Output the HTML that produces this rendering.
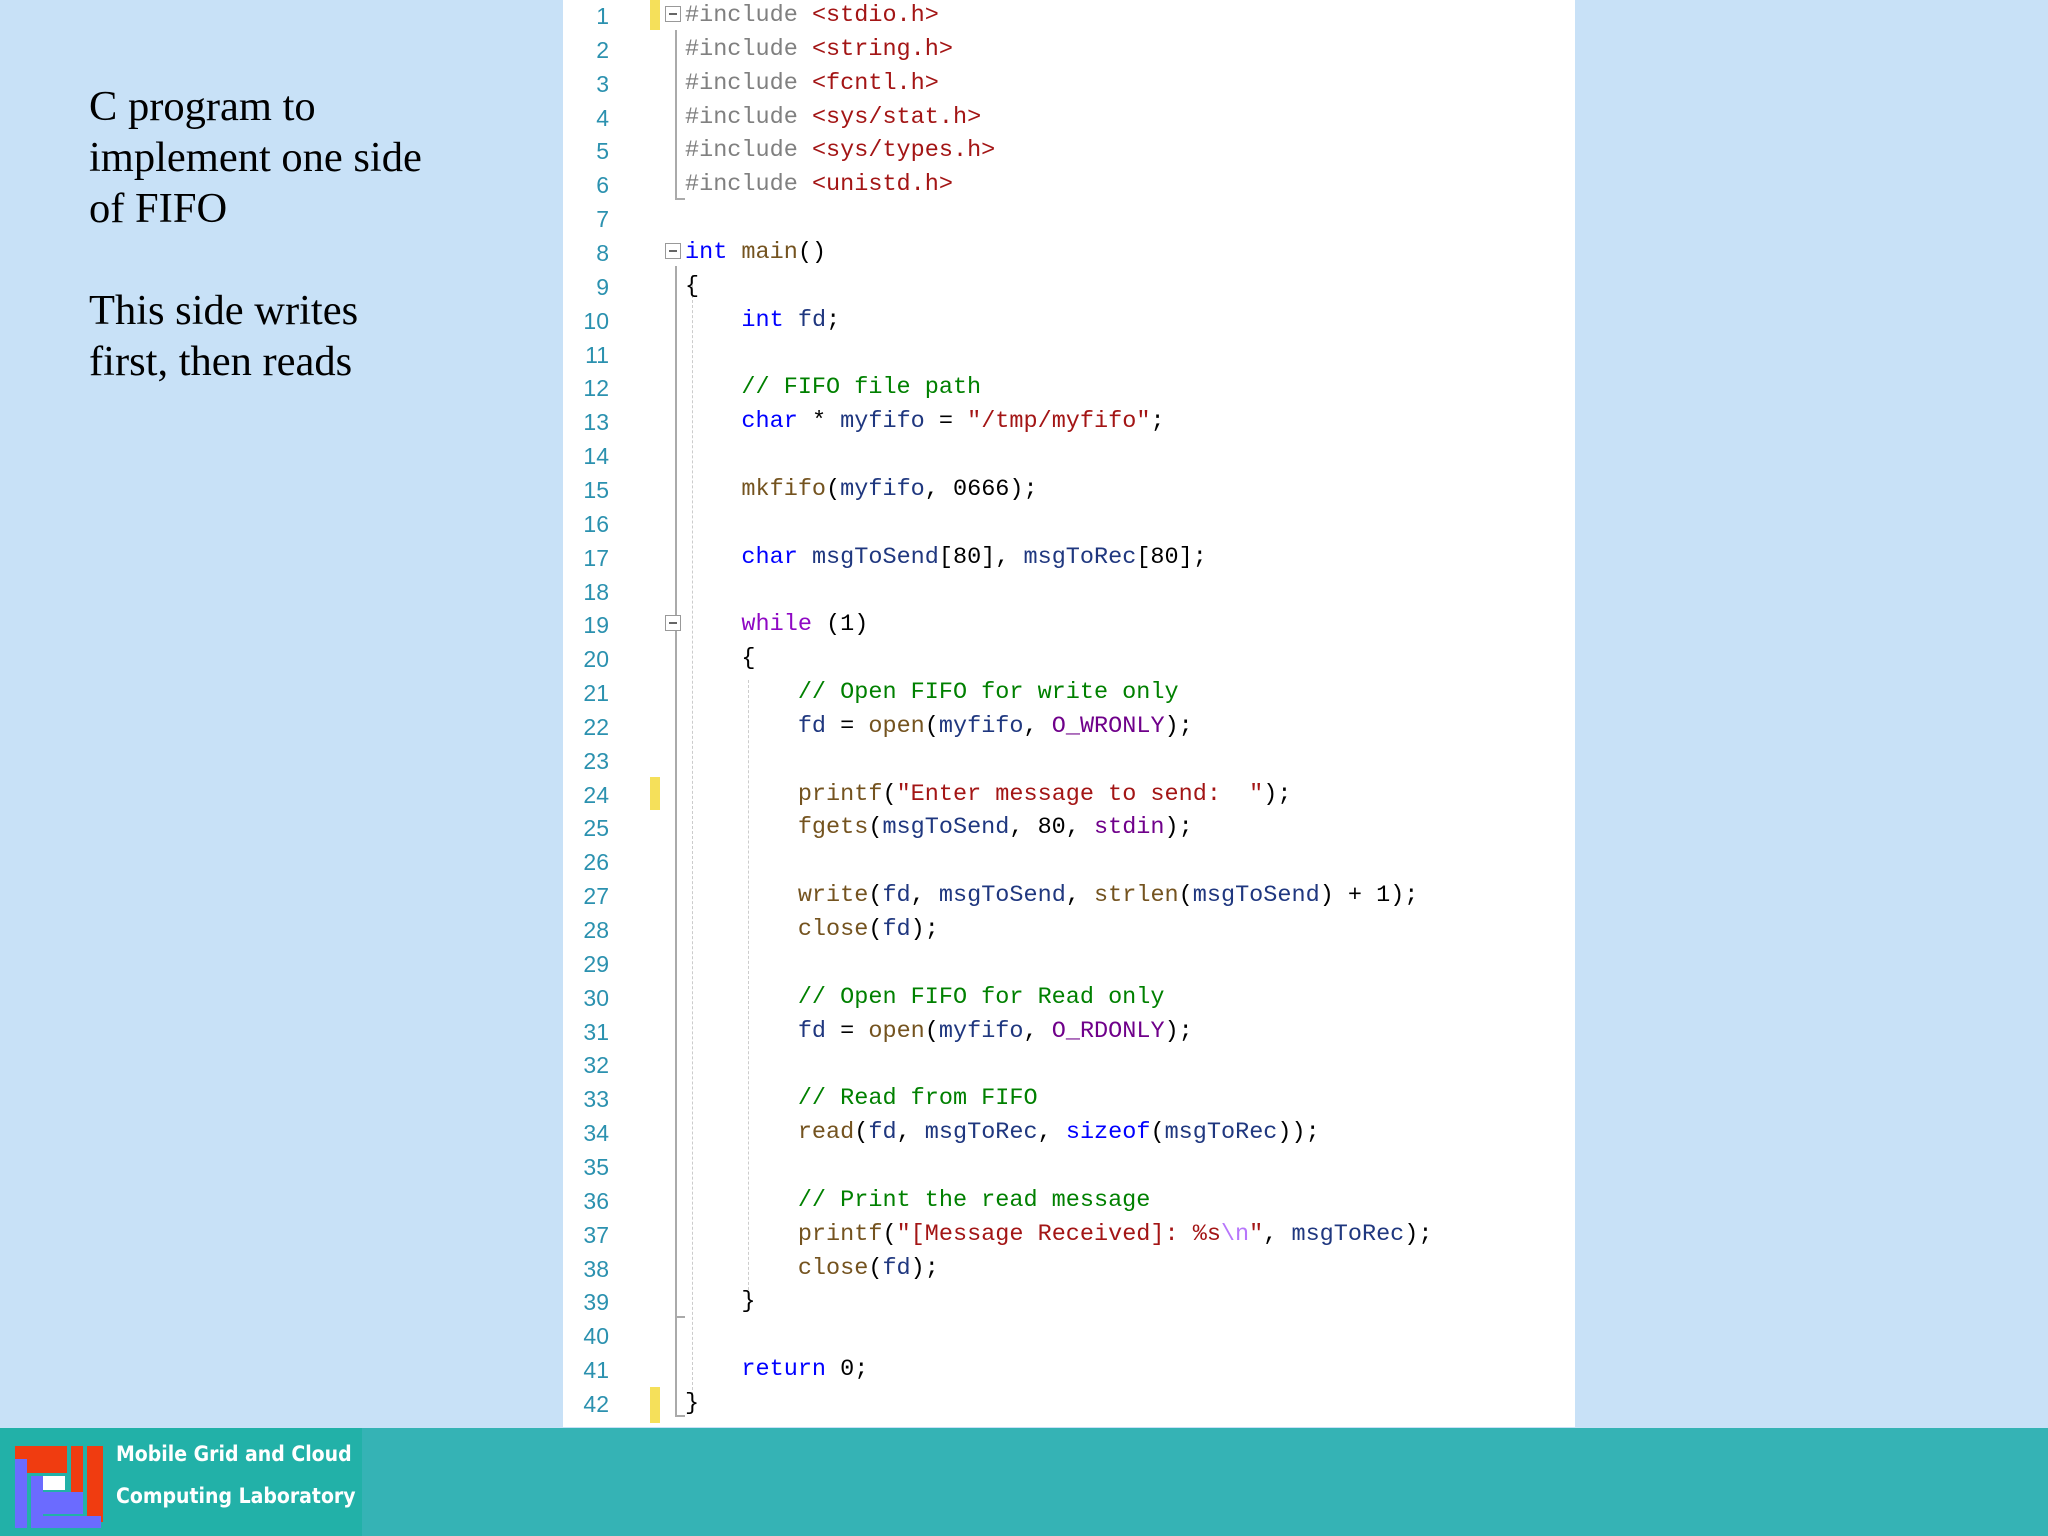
<!DOCTYPE html>
<html><head><meta charset="utf-8"><style>
html,body{margin:0;padding:0}
body{width:2048px;height:1536px;position:relative;overflow:hidden;background:#c8e1f7}
.side{position:absolute;left:89px;font-family:"Liberation Serif",serif;font-size:42.5px;line-height:51px;color:#000}
#code{position:absolute;left:563px;top:0;width:1012px;height:1427px;background:#fff}
.ln{position:absolute;left:0;width:46px;text-align:right;font-family:"Liberation Sans",sans-serif;font-size:23px;color:#2b91af;line-height:34px}
.cl{position:absolute;left:122px;font-family:"Liberation Mono",monospace;font-size:23.5px;line-height:34px;white-space:pre;color:#000}
.k{color:#0000ff}.w{color:#8f08c4}.c{color:#008000}.s{color:#a31515}.p{color:#808080}.v{color:#1f377f}.f{color:#74531f}.m{color:#6f008a}.e{color:#b776fb}
.y{position:absolute;left:87px;width:10px;background:#f5e05a}
.fb{position:absolute;width:14px;height:14px;border:1.5px solid #999;background:#fff}
.fb:after{content:"";position:absolute;left:3px;right:3px;top:6px;height:1.5px;background:#666}
.sl{position:absolute;left:112px;width:2px;background:#aaa}
.dl{position:absolute;width:0;border-left:1.5px dashed #ccc}
#foot{position:absolute;left:0;top:1428px;width:2048px;height:108px;background:#35b3b5}
#logo{position:absolute;left:0;top:0;width:362px;height:108px;background:#22b1a8}
.lt{position:absolute;left:116px;font-family:"DejaVu Sans Condensed","Liberation Sans Narrow",sans-serif;font-weight:bold;font-size:21px;color:#fff;white-space:nowrap}
</style></head><body>
<div class="side" style="top:81px">C program to<br>implement one side<br>of FIFO</div>
<div class="side" style="top:285px">This side writes<br>first, then reads</div>
<div id="code">
<div class="y" style="top:0;height:30px"></div>
<div class="y" style="top:777px;height:33px"></div>
<div class="y" style="top:1387px;height:36px"></div>
<div class="sl" style="top:30px;height:170px"></div>
<div style="position:absolute;left:112px;top:198px;width:10px;height:2px;background:#aaa"></div>
<div class="sl" style="top:266px;height:1150px"></div>
<div style="position:absolute;left:112px;top:1316px;width:10px;height:2px;background:#aaa"></div>
<div style="position:absolute;left:112px;top:1415px;width:10px;height:2px;background:#aaa"></div>
<div class="dl" style="left:129px;top:275px;height:1120px"></div>
<div class="dl" style="left:185px;top:680px;height:620px"></div>
<div class="fb" style="left:102px;top:6px"></div>
<div class="fb" style="left:102px;top:243px"></div>
<div class="fb" style="left:102px;top:615px"></div>
<div id="lines"></div>
</div>
<div id="foot"><div id="logo">
<svg style="position:absolute;left:15px;top:18px" width="90" height="82" viewBox="0 0 90 82">
<rect x="0" y="0" width="52" height="13" fill="#f03c10"/>
<rect x="0" y="13" width="12" height="69" fill="#6b6bff"/>
<rect x="12" y="13" width="40" height="14" fill="#f03c10"/>
<rect x="56" y="0" width="12" height="58" fill="#f03c10"/>
<rect x="72" y="0" width="16" height="76" fill="#f03c10"/>
<rect x="16" y="30" width="12" height="40" fill="#6b6bff"/>
<rect x="28" y="30" width="22" height="14" fill="#fff"/>
<rect x="28" y="46" width="40" height="22" fill="#6b6bff"/>
<rect x="16" y="70" width="70" height="12" fill="#6b6bff"/>
</svg>
<div class="lt" style="top:14px">Mobile Grid and Cloud</div>
<div class="lt" style="top:56px">Computing Laboratory</div>
</div></div>
<script>
var L=[
'<span class="p">#include</span> <span class="s">&lt;stdio.h&gt;</span>',
'<span class="p">#include</span> <span class="s">&lt;string.h&gt;</span>',
'<span class="p">#include</span> <span class="s">&lt;fcntl.h&gt;</span>',
'<span class="p">#include</span> <span class="s">&lt;sys/stat.h&gt;</span>',
'<span class="p">#include</span> <span class="s">&lt;sys/types.h&gt;</span>',
'<span class="p">#include</span> <span class="s">&lt;unistd.h&gt;</span>',
'',
'<span class="k">int</span> <span class="f">main</span>()',
'{',
'    <span class="k">int</span> <span class="v">fd</span>;',
'',
'    <span class="c">// FIFO file path</span>',
'    <span class="k">char</span> * <span class="v">myfifo</span> = <span class="s">"/tmp/myfifo"</span>;',
'',
'    <span class="f">mkfifo</span>(<span class="v">myfifo</span>, 0666);',
'',
'    <span class="k">char</span> <span class="v">msgToSend</span>[80], <span class="v">msgToRec</span>[80];',
'',
'    <span class="w">while</span> (1)',
'    {',
'        <span class="c">// Open FIFO for write only</span>',
'        <span class="v">fd</span> = <span class="f">open</span>(<span class="v">myfifo</span>, <span class="m">O_WRONLY</span>);',
'',
'        <span class="f">printf</span>(<span class="s">"Enter message to send:  "</span>);',
'        <span class="f">fgets</span>(<span class="v">msgToSend</span>, 80, <span class="m">stdin</span>);',
'',
'        <span class="f">write</span>(<span class="v">fd</span>, <span class="v">msgToSend</span>, <span class="f">strlen</span>(<span class="v">msgToSend</span>) + 1);',
'        <span class="f">close</span>(<span class="v">fd</span>);',
'',
'        <span class="c">// Open FIFO for Read only</span>',
'        <span class="v">fd</span> = <span class="f">open</span>(<span class="v">myfifo</span>, <span class="m">O_RDONLY</span>);',
'',
'        <span class="c">// Read from FIFO</span>',
'        <span class="f">read</span>(<span class="v">fd</span>, <span class="v">msgToRec</span>, <span class="k">sizeof</span>(<span class="v">msgToRec</span>));',
'',
'        <span class="c">// Print the read message</span>',
'        <span class="f">printf</span>(<span class="s">"[Message Received]: %s<span class="e">\\n</span>"</span>, <span class="v">msgToRec</span>);',
'        <span class="f">close</span>(<span class="v">fd</span>);',
'    }',
'',
'    <span class="k">return</span> 0;',
'}'];
var h='';
for(var i=0;i<L.length;i++){var t=(i*33.85-1).toFixed(1);
h+='<div class="ln" style="top:'+t+'px">'+(i+1)+'</div><div class="cl" style="top:'+t+'px">'+L[i]+'</div>';}
document.getElementById('lines').innerHTML=h;
</script>
</body></html>
